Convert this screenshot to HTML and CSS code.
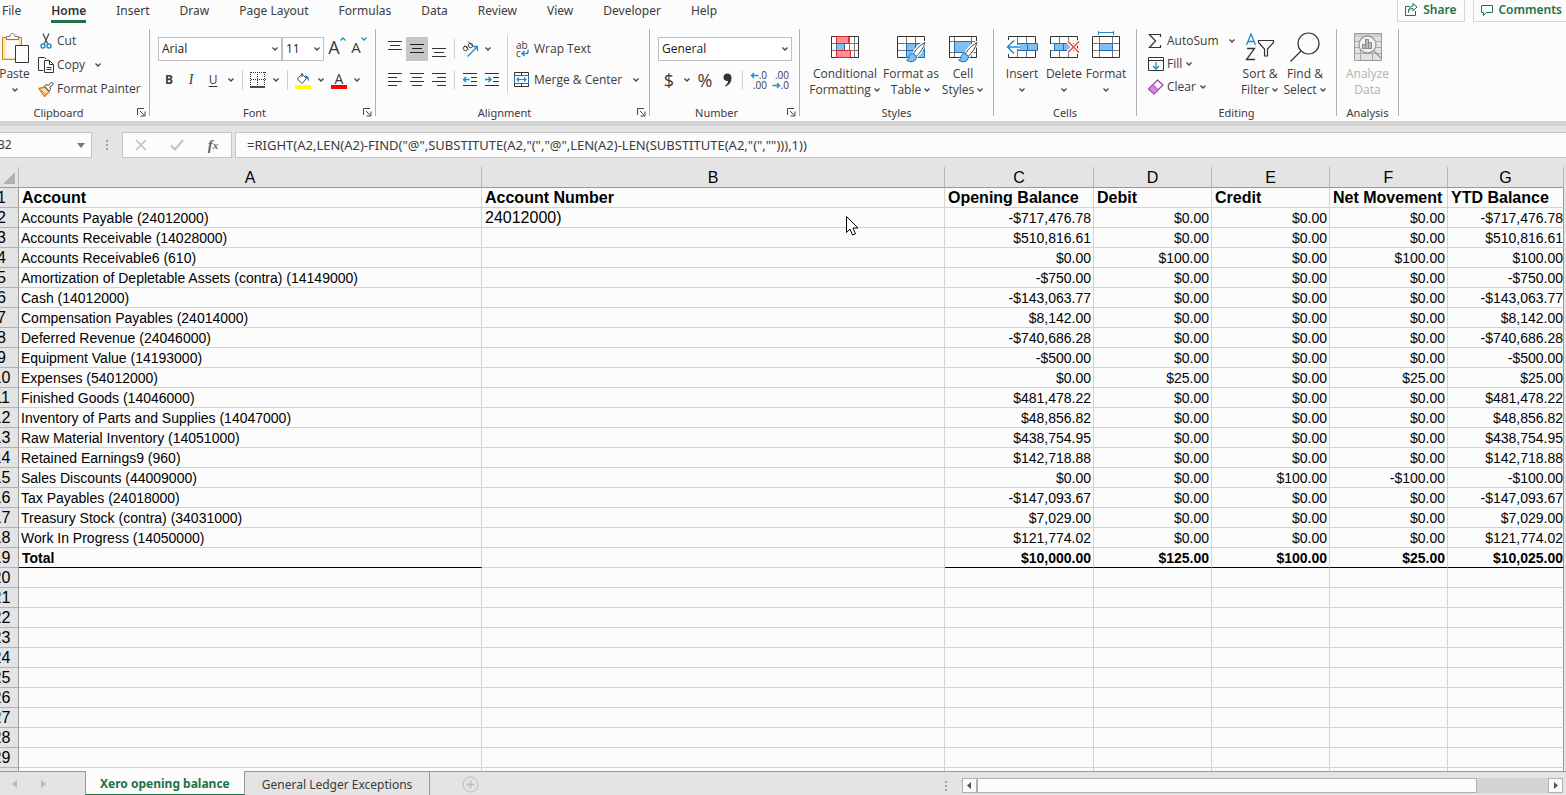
FILE: index.html
```
<!DOCTYPE html>
<html lang="en">
<head>
<meta charset="utf-8">
<title>Xero opening balance</title>
<link rel="stylesheet" href="styles.css">
</head>
<body>
<svg class="defs" aria-hidden="true">
  <symbol id="chev" viewBox="0 0 8 8"><path d="M1.500 2.500L4 5L6.500 2.500" fill="none" stroke="#444" stroke-width="1.300"/></symbol>
  <symbol id="launch" viewBox="0 0 9 9"><path d="M.5 7V.5H7M3 3l4 4M8 3.500V8H3.500" fill="none" stroke="#444"/></symbol>
  <symbol id="brush" viewBox="0 0 20 22"><path d="M18.500 1.500C13 4.500 9 9.500 7.500 13l3 2.500C14 12 17.500 7 18.500 1.500z" fill="#fff" stroke="#fff" stroke-width="3"/><path d="M19 1.500C13 5 9 9.500 7.500 13l2.500 2.500C14 12 17.500 7 19 1.500z" fill="#fff" stroke="#444"/><path d="M7.500 13c-3-1-4.500 1-4.500 3.500 0 1.500-1 2.500-2.500 2.500C3.500 21.500 10 22 10.500 15.500z" fill="#83beec" stroke="#1e6fb8"/></symbol>
</svg>

<header class="menu">
  <nav class="tabs">
    <button class="tab">File</button>
    <button class="tab active">Home</button>
    <button class="tab">Insert</button>
    <button class="tab">Draw</button>
    <button class="tab">Page Layout</button>
    <button class="tab">Formulas</button>
    <button class="tab">Data</button>
    <button class="tab">Review</button>
    <button class="tab">View</button>
    <button class="tab">Developer</button>
    <button class="tab">Help</button>
  </nav>
  <div class="actions">
    <button class="action"><svg width="13" height="13" viewBox="0 0 13 13" fill="none" stroke="#217346"><path d="M4.500 3.500h-4v9h10V8"/><path d="M3.500 9.500C3.500 6.500 5 5.500 8 5.500V8l4-4-4-3.500v2.500C5 3 3.500 6 3.500 9.500z"/></svg>Share</button>
    <button class="action"><svg width="12" height="12" viewBox="0 0 12 12" fill="none" stroke="#217346"><path d="M.5 1.500h11v7h-6l-3 3v-3h-2z"/></svg>Comments</button>
  </div>
</header>

<div class="ribbon">
  <section class="group clipboard">
    <div class="body">
      <button class="large paste">
        <svg width="32" height="32" viewBox="0 0 32 32"><path d="M3.500 6.500h19v22h-19z" fill="#fbe3a6" stroke="#d97c1a"/><path d="M6.500 9.500h13v17h-13z" fill="#fcfcfc"/><path d="M7.500 8.500v-3h3.500c0-4 5-4 5 0h3.500v3z" fill="#fcfcfc" stroke="#777"/><path d="M16.500 14.500h13v17h-13z" fill="#fcfcfc" stroke="#333"/></svg>
        <span>Paste</span><span><svg class="chev"><use href="#chev"/></svg></span>
      </button>
      <div class="stack">
        <button class="small"><svg width="16" height="16" viewBox="0 0 16 16" fill="none"><path d="M5 .5l5 11M11 .5l-5 11" stroke="#444" stroke-width="1.200"/><circle cx="5" cy="13" r="2" stroke="#1e8bcd" stroke-width="1.400"/><circle cx="11" cy="13" r="2" stroke="#1e8bcd" stroke-width="1.400"/></svg>Cut</button>
        <button class="small"><svg width="16" height="16" viewBox="0 0 16 16" fill="none" stroke="#333"><path d="M5 13.500H.5v-13h6L8 2"/><path d="M6.500 3.500h5l4 4v8h-9z" fill="#fcfcfc"/><path d="M11.500 3.500v4h4M8.500 10.500h5M8.500 12.500h5"/></svg>Copy<svg class="chev far"><use href="#chev"/></svg></button>
        <button class="small"><svg width="16" height="16" viewBox="0 0 16 16"><path d="M1 7.500l6-1.500 4 5-4.500 4.500z" fill="#fbe0b0" stroke="#e07b1a" stroke-width="1.300"/><path d="M3 9l5 5" stroke="#e07b1a"/><path d="M6.500 5l1.500-1.500 2.500 1L13.500 1 15.500 3l-3.500 3 .5 2.500L11 10z" fill="#fcfcfc" stroke="#444"/></svg>Format Painter</button>
      </div>
    </div>
    <footer><span>Clipboard</span><button class="launch" aria-label="Clipboard options"><svg><use href="#launch"/></svg></button></footer>
  </section>
  <i class="split"></i>

  <section class="group font">
    <div class="body rows">
      <div class="line">
        <label class="combo name"><select aria-label="Font"><option>Arial</option></select><svg class="chev"><use href="#chev"/></svg></label>
        <label class="combo size"><select aria-label="Font size"><option>11</option></select><svg class="chev"><use href="#chev"/></svg></label>
        <button class="tool grow"><span>A</span><svg width="6" height="4" viewBox="0 0 6 4"><path d="M.5 3.500L3 1l2.500 2.500" fill="none" stroke="#1e8bcd" stroke-width="1.300"/></svg></button>
        <button class="tool shrink"><span>A</span><svg width="6" height="4" viewBox="0 0 6 4"><path d="M.5.5L3 3 5.500.5" fill="none" stroke="#1e8bcd" stroke-width="1.300"/></svg></button>
      </div>
      <div class="line">
        <button class="tool b">B</button>
        <button class="tool i">I</button>
        <button class="tool u">U</button>
        <button class="drop"><svg class="chev"><use href="#chev"/></svg></button>
        <i class="bar"></i>
        <button class="tool"><svg width="16" height="16" viewBox="0 0 16 16"><path d="M1 .5h15M.5 0v14M7.500 0v14M14.500 0v14M1 7.500h15" stroke="#333" stroke-dasharray="1 1"/><path d="M0 15h15" stroke="#111" stroke-width="1.500"/></svg></button>
        <button class="drop"><svg class="chev"><use href="#chev"/></svg></button>
        <i class="bar"></i>
        <button class="tool"><svg width="16" height="17" viewBox="0 0 16 17"><path d="M7 2L2.500 7 7 11.500 11.500 6.500zM7 5V1" fill="#fff" stroke="#444"/><path d="M10 3.500c3 0 4 2.500 4 6-1-2-2-3-3-3z" fill="#1e6fb8"/><path d="M0 13h16v4H0z" fill="#ff0"/></svg></button>
        <button class="drop"><svg class="chev"><use href="#chev"/></svg></button>
        <button class="tool color"><span>A</span></button>
        <button class="drop"><svg class="chev"><use href="#chev"/></svg></button>
      </div>
    </div>
    <footer><span>Font</span><button class="launch" aria-label="Font options"><svg><use href="#launch"/></svg></button></footer>
  </section>
  <i class="split"></i>

  <section class="group align">
    <div class="body">
      <div class="rows">
        <div class="line">
          <button class="tool"><svg width="14" height="16" viewBox="0 0 14 16"><path d="M0 .5h14M2 4.500h10M0 8.500h14" stroke="#333"/></svg></button>
          <button class="tool on"><svg width="14" height="16" viewBox="0 0 14 16"><path d="M0 3.500h14M2 7.500h10M0 11.500h14" stroke="#222"/></svg></button>
          <button class="tool"><svg width="14" height="16" viewBox="0 0 14 16"><path d="M0 7.500h14M2 11.500h10M0 15.500h14" stroke="#333"/></svg></button>
          <i class="bar"></i>
          <button class="tool"><svg width="16" height="16" viewBox="0 0 16 16" fill="none"><circle cx="3.500" cy="7.500" r="2.200" stroke="#444"/><path d="M2.500 4.500l4 4" stroke="#444"/><path d="M6 .5l4.500 4.500" stroke="#444"/><circle cx="8.500" cy="4.500" r="2.200" stroke="#444"/><path d="M5.500 15.500L15 6M11 5.500h4.500V10" stroke="#1e8bcd" stroke-width="1.300"/></svg></button>
          <button class="drop"><svg class="chev"><use href="#chev"/></svg></button>
        </div>
        <div class="line">
          <button class="tool"><svg width="14" height="14" viewBox="0 0 14 14"><path d="M0 .5h14M0 4.500h9M0 8.500h14M0 12.500h9" stroke="#333"/></svg></button>
          <button class="tool"><svg width="14" height="14" viewBox="0 0 14 14"><path d="M0 .5h14M2 4.500h10M0 8.500h14M2 12.500h10" stroke="#333"/></svg></button>
          <button class="tool"><svg width="14" height="14" viewBox="0 0 14 14"><path d="M0 .5h14M5 4.500h9M0 8.500h14M5 12.500h9" stroke="#333"/></svg></button>
          <i class="bar"></i>
          <button class="tool"><svg width="14" height="14" viewBox="0 0 14 14" fill="none"><path d="M0 .5h14M8 4.500h6M8 8.500h6M0 12.500h14" stroke="#333"/><path d="M6.500 6.500h-6M3 4L.5 6.500 3 9" stroke="#1e8bcd" stroke-width="1.400"/></svg></button>
          <button class="tool"><svg width="14" height="14" viewBox="0 0 14 14" fill="none"><path d="M0 .5h14M8 4.500h6M8 8.500h6M0 12.500h14" stroke="#333"/><path d="M0 6.500h6M3.500 4L6 6.500 3.500 9" stroke="#1e8bcd" stroke-width="1.400"/></svg></button>
        </div>
      </div>
      <i class="tallbar"></i>
      <div class="rows">
        <button class="small"><span class="abc"><span>ab</span><span>c<svg width="8" height="8" viewBox="0 0 8 7"><path d="M7 0v2.500q0 1.500-2 1.500H1M3.500 1.500L1 4l2.500 2.500" fill="none" stroke="#1e8bcd" stroke-width="1.400"/></svg></span></span>Wrap Text</button>
        <button class="small"><svg width="16" height="16" viewBox="0 0 16 16" fill="none"><path d="M.5 4V.5h14V4M.5 12v2.500h14V12M7.500 0v3M7.500 12v3M0 3.500h15M0 11.500h15" stroke="#333"/><path d="M.5 3.500h14v8H.5z" fill="#fff" stroke="#1e6fb8"/><path d="M3 7.500h9M5 5.500l-2 2 2 2M10 5.500l2 2-2 2" stroke="#1e8bcd" stroke-width="1.200"/></svg>Merge &amp; Center<svg class="chev far"><use href="#chev"/></svg></button>
      </div>
    </div>
    <footer><span>Alignment</span><button class="launch" aria-label="Alignment options"><svg><use href="#launch"/></svg></button></footer>
  </section>
  <i class="split"></i>

  <section class="group number">
    <div class="body rows">
      <div class="line">
        <label class="combo format"><select aria-label="Number format"><option>General</option></select><svg class="chev"><use href="#chev"/></svg></label>
      </div>
      <div class="line">
        <button class="tool sign">$</button>
        <button class="drop"><svg class="chev"><use href="#chev"/></svg></button>
        <button class="tool sign">%</button>
        <button class="tool"><svg width="9" height="14" viewBox="0 0 9 14"><path d="M4.500.5C7 .5 8.500 2 8.500 5c0 4-2 7-6 8.500l-.5-1C4 11 5 9.500 5 8 2.500 8.500.5 7 .5 4.500.5 2 2 .5 4.500.5z" fill="#333"/></svg></button>
        <i class="bar"></i>
        <button class="tool dec"><span><svg width="9" height="7" viewBox="0 0 9 7"><path d="M8.500 3.500h-7M4 1L1.500 3.500 4 6" fill="none" stroke="#1e8bcd" stroke-width="1.300"/></svg>.0</span><span>.00</span></button>
        <button class="tool dec"><span>.00</span><span><svg width="9" height="7" viewBox="0 0 9 7"><path d="M.5 3.500h7M5 1l2.500 2.500L5 6" fill="none" stroke="#1e8bcd" stroke-width="1.300"/></svg>.0</span></button>
      </div>
    </div>
    <footer><span>Number</span><button class="launch" aria-label="Number options"><svg><use href="#launch"/></svg></button></footer>
  </section>
  <i class="split"></i>

  <section class="group styles">
    <div class="body">
      <button class="large cond">
        <svg width="32" height="32" viewBox="0 0 32 32"><path d="M2.500 5.500h27v21h-27z" fill="#fff" stroke="#333"/><path d="M3 12.500h26M3 19.500h26M7.500 6v20M20.500 6v20M25.500 6v20" stroke="#777"/><path d="M7.500 12.500h8v7h-8z" fill="#83beec" stroke="#1e6fb8"/><path d="M7.500 5.500h12v7h-12zM7.500 19.500h14v7h-14z" fill="#ff8f94" stroke="#d92b2b"/></svg>
        <span>Conditional</span><span>Formatting<svg class="chev"><use href="#chev"/></svg></span>
      </button>
      <button class="large fmt">
        <svg width="32" height="32" viewBox="0 0 32 32"><path d="M2.500 5.500h27v21h-27z" fill="#fff" stroke="#333"/><path d="M3 12.500h26M3 19.500h26M11.500 6v20M20.500 6v20" stroke="#777"/><path d="M11.500 12.500h18v14h-18z" fill="#83beec" stroke="#1e6fb8"/><path d="M11 19.500h18M20.500 12v14" stroke="#1e6fb8"/><use href="#brush" x="10" y="10" width="22" height="22"/></svg>
        <span>Format as</span><span>Table<svg class="chev"><use href="#chev"/></svg></span>
      </button>
      <button class="large cell">
        <svg width="32" height="32" viewBox="0 0 32 32"><path d="M2.500 5.500h27v21h-27z" fill="#fff" stroke="#333"/><path d="M3 10.500h26M3 21.500h26M7.500 6v20M24.500 6v20" stroke="#777"/><path d="M7.500 10.500h17v11h-17z" fill="#83beec" stroke="#1e6fb8"/><use href="#brush" x="10" y="10" width="22" height="22"/></svg>
        <span>Cell</span><span>Styles<svg class="chev"><use href="#chev"/></svg></span>
      </button>
    </div>
    <footer><span>Styles</span></footer>
  </section>
  <i class="split"></i>

  <section class="group cells">
    <div class="body">
      <button class="large">
        <svg width="32" height="32" viewBox="0 0 32 32"><path d="M2.500 5.500h27v21h-27z" fill="#fff" stroke="#333"/><path d="M3 12.500h26M3 19.500h26M11.500 6v20M20.500 6v20" stroke="#777"/><path d="M0 9h11v14H0z" fill="#fcfcfc"/><path d="M11.500 12.500h20v7h-20zM21.500 12.500v7" fill="#83beec" stroke="#1e6fb8"/><path d="M14 16H2M8 9.500L1.500 16 8 22.500" fill="none" stroke="#fff" stroke-width="4"/><path d="M14 16H2M8 9.500L1.500 16 8 22.500" fill="none" stroke="#1e8bcd" stroke-width="1.500"/></svg>
        <span>Insert</span><span><svg class="chev"><use href="#chev"/></svg></span>
      </button>
      <button class="large">
        <svg width="32" height="32" viewBox="0 0 32 32"><path d="M2.500 5.500h27v21h-27z" fill="#fff" stroke="#333"/><path d="M3 12.500h26M3 19.500h26M11.500 6v20M20.500 6v20" stroke="#777"/><path d="M0 13h7v6H0z" fill="#fcfcfc"/><path d="M6.500 12.500h15l3 3.500-3 3.500h-15zM15.500 12.500v7" fill="#83beec" stroke="#1e6fb8"/><path d="M20 10.500l11 11M31 10.500l-11 11" stroke="#fff" stroke-width="4"/><path d="M20 10.500l11 11M31 10.500l-11 11" stroke="#f0484c" stroke-width="1.500"/></svg>
        <span>Delete</span><span><svg class="chev"><use href="#chev"/></svg></span>
      </button>
      <button class="large">
        <svg width="32" height="32" viewBox="0 0 32 32"><path d="M2.500 5.500h27v21h-27z" fill="#fff" stroke="#333"/><path d="M3 12.500h26M3 19.500h26M9.500 6v20M22.500 6v20" stroke="#777"/><path d="M9.500 12.500h13v7h-13z" fill="#83beec" stroke="#1e6fb8"/><path d="M8.500 0v4M23.500 0v4M9 1.500h15" stroke="#1e8bcd"/></svg>
        <span>Format</span><span><svg class="chev"><use href="#chev"/></svg></span>
      </button>
    </div>
    <footer><span>Cells</span></footer>
  </section>
  <i class="split"></i>

  <section class="group editing">
    <div class="body">
      <div class="stack">
        <button class="small"><svg width="16" height="16" viewBox="0 0 16 16"><path d="M12.500 4V1.500h-11l6 6.500-6 6.500h11V12" fill="none" stroke="#333" stroke-width="1.200"/></svg>AutoSum<svg class="chev far"><use href="#chev"/></svg></button>
        <button class="small"><svg width="16" height="16" viewBox="0 0 16 16" fill="none"><path d="M.5 1.500h15v13H.5zM0 4.500h16" stroke="#333"/><path d="M8 6v7M5 10l3 3 3-3" stroke="#1e8bcd" stroke-width="1.300"/></svg>Fill<svg class="chev"><use href="#chev"/></svg></button>
        <button class="small"><svg width="16" height="16" viewBox="0 0 16 16"><path d="M9.500 1L15 6l-9 9-5.500-5z" fill="#fff" stroke="#9b3fa5" stroke-width="1.200"/><path d="M5 5.500l5.500 5.500L6 15 .5 10z" fill="#d08ad8" stroke="#9b3fa5"/></svg>Clear<svg class="chev"><use href="#chev"/></svg></button>
      </div>
      <button class="large sort">
        <svg width="32" height="32" viewBox="0 0 32 32" fill="none"><path d="M2.500 14L7 3l4.500 11M4 10.500h6" stroke="#1e8bcd" stroke-width="1.300"/><path d="M3 17.500h7.500L2.500 28.500h8.500" stroke="#333" stroke-width="1.300"/><path d="M14.500 9.500h15v2l-6 6.500v7h-3v-7l-6-6.500z" stroke="#333" stroke-width="1.200"/></svg>
        <span>Sort &amp;</span><span>Filter<svg class="chev"><use href="#chev"/></svg></span>
      </button>
      <button class="large find">
        <svg width="32" height="32" viewBox="0 0 32 32" fill="none" stroke="#333" stroke-width="1.200"><circle cx="19.500" cy="12.500" r="10.500"/><path d="M12 20L1.500 30.500"/></svg>
        <span>Find &amp;</span><span>Select<svg class="chev"><use href="#chev"/></svg></span>
      </button>
    </div>
    <footer><span>Editing</span></footer>
  </section>
  <i class="split"></i>

  <section class="group analysis">
    <div class="body">
      <button class="large" disabled>
        <svg width="32" height="32" viewBox="0 0 32 32"><path d="M2.500 2.500h27v27h-27z" fill="#e2e2e2" stroke="#999"/><path d="M3 3h26v3H3z" fill="#ccc"/><path d="M3 10.500h26M3 16.500h26M3 22.500h26M8.500 10v19M20.500 10v19" stroke="#aaa"/><circle cx="15.500" cy="13.500" r="8.500" fill="#f2f2f2" stroke="#999" stroke-width="1.300"/><path d="M22 20l7 7" stroke="#999" stroke-width="1.500"/><path d="M10.500 13.500h3v4h-3zM13.500 8.500h3v9h-3zM16.500 11.500h3v6h-3z" fill="#bbb" stroke="#888"/></svg>
        <span>Analyze</span><span>Data</span>
      </button>
    </div>
    <footer><span>Analysis</span></footer>
  </section>
  <i class="split"></i>
</div>

<div class="formulabar">
  <div class="namebox"><span>B2</span><svg width="8" height="5" viewBox="0 0 8 5"><path d="M0 0h8L4 5z" fill="#777"/></svg></div>
  <i class="dots"></i>
  <div class="entry">
    <button aria-label="Cancel"><svg width="12" height="12" viewBox="0 0 12 12"><path d="M1 1l10 10M11 1L1 11" stroke="#c0c0c0" stroke-width="1.600"/></svg></button>
    <button aria-label="Enter"><svg width="14" height="12" viewBox="0 0 14 12"><path d="M1 6.500L5 10.500 13 1" fill="none" stroke="#c0c0c0" stroke-width="2"/></svg></button>
    <button class="fx" aria-label="Insert function">f<sub>x</sub></button>
  </div>
  <input class="formula" aria-label="Formula" value='=RIGHT(A2,LEN(A2)-FIND("@",SUBSTITUTE(A2,"(","@",LEN(A2)-LEN(SUBSTITUTE(A2,"(",""))),1))'>
</div>

<main class="sheet">
  <table>
    <colgroup><col class="rh"><col class="wide"><col class="wide"><col class="c"><col class="n"><col class="n"><col class="n"><col></colgroup>
    <thead><tr><th class="corner"><svg width="12" height="12" viewBox="0 0 12 12"><path d="M12 0v12H0z" fill="#b1b1b1"/></svg></th><th>A</th><th>B</th><th>C</th><th>D</th><th>E</th><th>F</th><th>G</th></tr></thead>
    <tbody>
      <tr class="head"><th>1</th><td>Account</td><td>Account Number</td><td>Opening Balance</td><td>Debit</td><td>Credit</td><td>Net Movement</td><td>YTD Balance</td></tr>
      <tr><th>2</th><td>Accounts Payable (24012000)</td><td>24012000)</td><td>-$717,476.78</td><td>$0.00</td><td>$0.00</td><td>$0.00</td><td>-$717,476.78</td></tr>
      <tr><th>3</th><td>Accounts Receivable (14028000)</td><td></td><td>$510,816.61</td><td>$0.00</td><td>$0.00</td><td>$0.00</td><td>$510,816.61</td></tr>
      <tr><th>4</th><td>Accounts Receivable6 (610)</td><td></td><td>$0.00</td><td>$100.00</td><td>$0.00</td><td>$100.00</td><td>$100.00</td></tr>
      <tr><th>5</th><td>Amortization of Depletable Assets (contra) (14149000)</td><td></td><td>-$750.00</td><td>$0.00</td><td>$0.00</td><td>$0.00</td><td>-$750.00</td></tr>
      <tr><th>6</th><td>Cash (14012000)</td><td></td><td>-$143,063.77</td><td>$0.00</td><td>$0.00</td><td>$0.00</td><td>-$143,063.77</td></tr>
      <tr><th>7</th><td>Compensation Payables (24014000)</td><td></td><td>$8,142.00</td><td>$0.00</td><td>$0.00</td><td>$0.00</td><td>$8,142.00</td></tr>
      <tr><th>8</th><td>Deferred Revenue (24046000)</td><td></td><td>-$740,686.28</td><td>$0.00</td><td>$0.00</td><td>$0.00</td><td>-$740,686.28</td></tr>
      <tr><th>9</th><td>Equipment Value (14193000)</td><td></td><td>-$500.00</td><td>$0.00</td><td>$0.00</td><td>$0.00</td><td>-$500.00</td></tr>
      <tr><th>10</th><td>Expenses (54012000)</td><td></td><td>$0.00</td><td>$25.00</td><td>$0.00</td><td>$25.00</td><td>$25.00</td></tr>
      <tr><th>11</th><td>Finished Goods (14046000)</td><td></td><td>$481,478.22</td><td>$0.00</td><td>$0.00</td><td>$0.00</td><td>$481,478.22</td></tr>
      <tr><th>12</th><td>Inventory of Parts and Supplies (14047000)</td><td></td><td>$48,856.82</td><td>$0.00</td><td>$0.00</td><td>$0.00</td><td>$48,856.82</td></tr>
      <tr><th>13</th><td>Raw Material Inventory (14051000)</td><td></td><td>$438,754.95</td><td>$0.00</td><td>$0.00</td><td>$0.00</td><td>$438,754.95</td></tr>
      <tr><th>14</th><td>Retained Earnings9 (960)</td><td></td><td>$142,718.88</td><td>$0.00</td><td>$0.00</td><td>$0.00</td><td>$142,718.88</td></tr>
      <tr><th>15</th><td>Sales Discounts (44009000)</td><td></td><td>$0.00</td><td>$0.00</td><td>$100.00</td><td>-$100.00</td><td>-$100.00</td></tr>
      <tr><th>16</th><td>Tax Payables (24018000)</td><td></td><td>-$147,093.67</td><td>$0.00</td><td>$0.00</td><td>$0.00</td><td>-$147,093.67</td></tr>
      <tr><th>17</th><td>Treasury Stock (contra) (34031000)</td><td></td><td>$7,029.00</td><td>$0.00</td><td>$0.00</td><td>$0.00</td><td>$7,029.00</td></tr>
      <tr><th>18</th><td>Work In Progress (14050000)</td><td></td><td>$121,774.02</td><td>$0.00</td><td>$0.00</td><td>$0.00</td><td>$121,774.02</td></tr>
      <tr class="total"><th>19</th><td>Total</td><td></td><td>$10,000.00</td><td>$125.00</td><td>$100.00</td><td>$25.00</td><td>$10,025.00</td></tr>
      <tr><th>20</th><td></td><td></td><td></td><td></td><td></td><td></td><td></td></tr>
      <tr><th>21</th><td></td><td></td><td></td><td></td><td></td><td></td><td></td></tr>
      <tr><th>22</th><td></td><td></td><td></td><td></td><td></td><td></td><td></td></tr>
      <tr><th>23</th><td></td><td></td><td></td><td></td><td></td><td></td><td></td></tr>
      <tr><th>24</th><td></td><td></td><td></td><td></td><td></td><td></td><td></td></tr>
      <tr><th>25</th><td></td><td></td><td></td><td></td><td></td><td></td><td></td></tr>
      <tr><th>26</th><td></td><td></td><td></td><td></td><td></td><td></td><td></td></tr>
      <tr><th>27</th><td></td><td></td><td></td><td></td><td></td><td></td><td></td></tr>
      <tr><th>28</th><td></td><td></td><td></td><td></td><td></td><td></td><td></td></tr>
      <tr><th>29</th><td></td><td></td><td></td><td></td><td></td><td></td><td></td></tr>
      <tr><th></th><td></td><td></td><td></td><td></td><td></td><td></td><td></td></tr>
    </tbody>
  </table>
</main>

<footer class="bottom">
  <div class="steps">
    <button aria-label="Previous sheet"><svg width="5" height="8" viewBox="0 0 5 8"><path d="M5 0v8L0 4z" fill="#bbb"/></svg></button>
    <button aria-label="Next sheet"><svg width="5" height="8" viewBox="0 0 5 8"><path d="M0 0v8l5-4z" fill="#bbb"/></svg></button>
  </div>
  <button class="sheettab current">Xero opening balance</button>
  <button class="sheettab">General Ledger Exceptions</button>
  <button class="add" aria-label="New sheet"><svg width="17" height="17" viewBox="0 0 17 17" fill="none" stroke="#bdbdbd"><circle cx="8.500" cy="8.500" r="7.500"/><path d="M8.500 4.500v8M4.500 8.500h8" stroke-width="1.600"/></svg></button>
  <div class="scroll">
    <i class="dots"></i>
    <div class="track">
      <button aria-label="Scroll left"><svg width="4" height="7" viewBox="0 0 4 7"><path d="M4 0v7L0 3.500z" fill="#555"/></svg></button>
      <i class="thumb"></i>
      <button aria-label="Scroll right"><svg width="4" height="7" viewBox="0 0 4 7"><path d="M0 0v7l4-3.500z" fill="#555"/></svg></button>
    </div>
  </div>
</footer>

<svg class="pointer" width="13" height="20" viewBox="0 0 13 20"><path d="M.5.5v16l3.500-3.500 2.500 6 3-1.200-2.500-5.800h5z" fill="#fff" stroke="#000"/></svg>
</body>
</html>
```

FILE: styles.css
```
* { box-sizing: border-box; }
body {
  margin: 0;
  height: 100vh;
  overflow: hidden;
  display: flex;
  flex-direction: column;
  background: #fcfcfc;
  color: #3b3b3b;
  font: 12px/16px "Noto Sans", "Open Sans", sans-serif;
}
button, select, input { font: inherit; color: inherit; margin: 0; padding: 0; border: 0; background: none; border-radius: 0; }
button { white-space: nowrap; }
svg { display: block; flex: none; }
.defs { position: absolute; width: 0; height: 0; }

/* Menu tabs */
.menu { display: flex; justify-content: space-between; align-items: flex-start; height: 29px; }
.tabs { display: flex; gap: 30px; padding-left: 2px; }
.tab { height: 23px; padding-top: 1px; line-height: 16px; border-bottom: 3px solid transparent; }
.tab.active { font-weight: 600; color: #333; border-color: #217346; }
.actions { display: flex; gap: 8px; }
.action { display: flex; align-items: center; gap: 5px; height: 22px; padding: 0 8px 2px 7px; border: 1px solid #d8d8d8; border-top: 0; color: #217346; font-weight: 600; }
.action:last-child { border-right: 0; padding-right: 4px; }

/* Ribbon */
.ribbon { display: flex; height: 97px; flex: none; border-bottom: 5px solid #d2d2d2; font-family: "Open Sans", "Noto Sans", sans-serif; }
.group { display: flex; flex-direction: column; flex: none; }
.split { width: 1px; background: #b1b1b1; margin-bottom: 5px; }
.group .body { display: flex; height: 75px; }
.group footer { display: flex; align-items: center; height: 17px; }
.group footer span { flex: 1; text-align: center; font: 11px/16px "Noto Sans", sans-serif; }
.launch { width: 16px; display: flex; justify-content: center; }
.launch svg { width: 9px; height: 9px; }
.chev { display: inline-block; width: 8px; height: 8px; }
.stack { display: flex; flex-direction: column; }
.small { display: flex; align-items: center; gap: 3px; height: 24px; }
.small .far { margin-left: 6px; }
.large { display: flex; flex-direction: column; align-items: center; padding-top: 2px; }
.large > svg { margin-bottom: 3px; }
.large span { display: flex; align-items: center; gap: 2px; height: 16px; }
.large:disabled { color: #b1b1b1; }
.body.rows, .rows { display: flex; flex-direction: column; gap: 7px; padding-top: 8px; }
.line { display: flex; align-items: center; height: 24px; }
.tool { width: 22px; height: 24px; display: flex; align-items: center; justify-content: center; }
.tool.on { background: #c6c6c6; }
.drop { width: 14px; display: flex; justify-content: center; }
.bar { width: 1px; height: 20px; background: #d0d0d0; margin: 0 4px; }
.tallbar { width: 1px; height: 58px; background: #d0d0d0; margin: 6px 6px 0 4px; }
.combo { position: relative; height: 24px; }
.combo select { appearance: none; width: 100%; height: 100%; padding: 0 3px; border: 1px solid #c0c0c0; background: #fff; color: #222; }
.combo .chev { position: absolute; right: 3px; top: 8px; pointer-events: none; }

.clipboard { width: 149px; }
.clipboard footer span { padding-right: 16px; }
.paste { width: 29px; }
.clipboard .stack { padding-left: 9px; }
.font { width: 225px; }
.font .rows, .number .rows { padding-left: 8px; }
.combo.name { width: 124px; }
.combo.size { width: 42px; }
.grow, .shrink { align-items: flex-start; }
.grow { font-size: 18px; line-height: 20px; margin-left: 2px; }
.shrink { font-size: 15px; line-height: 20px; }
.b { font-weight: 700; }
.i { font-family: "Liberation Serif", serif; font-style: italic; font-size: 14px; }
.u { text-decoration: underline; text-underline-offset: 2px; }
.color span { width: 16px; height: 17px; line-height: 13px; font-size: 14px; border-bottom: 4px solid #f00; }
.align { width: 273px; }
.align .body { padding-left: 8px; }
.align .small { gap: 4px; }
.abc { display: flex; flex-direction: column; width: 16px; padding-left: 2px; font-size: 10px; line-height: 8px; text-align: left; }
.abc span { display: flex; height: 8px; }
.number { width: 149px; }
.combo.format { width: 134px; }
.sign { font-size: 18px; }
.dec { flex-direction: column; align-items: flex-end; padding-right: 2px; font-size: 10px; line-height: 10px; }
.dec span { display: flex; align-items: center; }
.styles { width: 193px; }
.styles .body { padding-left: 9px; gap: 2px; }
.cond { width: 72px; }
.fmt { width: 56px; }
.cell { width: 44px; }
.cells { width: 142px; }
.cells .body { padding-left: 7px; }
.cells .large { width: 42px; }
.editing { width: 199px; }
.editing .small { height: 23px; }
.editing .stack { padding-left: 11px; width: 101px; }
.sort { width: 44px; }
.find { width: 46px; }
.analysis { width: 61px; }
.analysis .body { justify-content: center; }

/* Formula bar */
.formulabar { display: flex; align-items: center; height: 41px; flex: none; padding-bottom: 3px; background: #e4e4e4; }
.namebox, .entry, .formula { height: 26px; border: 1px solid #c6c6c6; background: #fcfcfc; }
.namebox { display: flex; align-items: center; justify-content: space-between; width: 92px; padding-right: 6px; border-left: 0; overflow: hidden; }
.namebox span { margin-left: -3px; }
.dots { width: 2px; height: 10px; background: repeating-linear-gradient(#a0a0a0 0 2px, transparent 2px 4px); }
.formulabar .dots { margin: 0 14px; }
.entry { display: flex; width: 110px; }
.entry button { flex: 1; display: flex; justify-content: center; align-items: center; }
.entry .fx { font: italic 700 15px "Liberation Serif", serif; color: #666; }
.fx sub { font-size: 11px; }
.formula { flex: 1; margin-left: 3px; padding-left: 11px; border-right: 0; font-size: 13px; }

/* Grid */
.sheet { flex: 1; min-height: 0; overflow: hidden; padding-right: 2px; background: #e4e4e4; }
table { table-layout: fixed; width: calc(100% + 15px); margin-left: -15px; border-collapse: separate; border-spacing: 0; color: #000; font: 14px/18px "Liberation Sans", Arial, sans-serif; }
.rh { width: 34px; }
.wide { width: 463px; }
.c { width: 149px; }
.n { width: 118px; }
th { height: 20px; padding: 0; background: #e4e4e4; font-size: 16px; font-weight: 400; border-right: 1px solid #999; border-bottom: 1px solid #b1b1b1; }
thead th { height: 21px; padding-top: 2px; border-right-color: #b8b8b8; border-bottom-color: #999; }
.corner svg { margin-left: 18px; }
td { height: 20px; padding: 0 2px; background: #fcfcfc; border-right: 1px solid #d4d4d4; border-bottom: 1px solid #d4d4d4; text-align: right; white-space: nowrap; }
td:last-child { padding-right: 0; border-right-color: #999; }
td:nth-child(2), td:nth-child(3) { text-align: left; }
td:nth-child(3) { font-size: 16px; padding-left: 3px; }
.head td { font-size: 16px; font-weight: 700; text-align: left; padding: 0 3px; }
.total td { font-weight: 700; border-bottom-color: #000; }
.total td:nth-child(2) { padding-left: 3px; }
.total td:nth-child(3) { border-bottom-color: #d4d4d4; }

/* Sheet tabs */
.bottom { display: flex; height: 24px; flex: none; background: #e4e4e4; border-top: 1px solid #999; }
.steps { display: flex; align-items: center; width: 85px; padding-left: 12px; gap: 24px; }
.sheettab { padding: 2px 17px 0; border-right: 1px solid #999; }
.sheettab.current { margin-top: -1px; padding: 2px 14px 0; background: #fcfcfc; border-left: 1px solid #999; border-bottom: 1px solid #217346; color: #217346; font-weight: 700; }
.add { padding: 2px 32px 0; }
.scroll { display: flex; align-items: center; gap: 15px; margin-left: auto; width: 40%; padding: 4px 3px 0 5px; }
.track { display: flex; flex: 1; height: 15px; background: #d4d4d4; }
.track button { display: flex; align-items: center; justify-content: center; width: 15px; background: #fcfcfc; border: 1px solid #b1b1b1; }
.thumb { width: 500px; background: #fcfcfc; border: 1px solid #b1b1b1; }
.track button:last-child { margin-left: auto; }

.pointer { position: absolute; left: 846px; top: 216px; }
```
